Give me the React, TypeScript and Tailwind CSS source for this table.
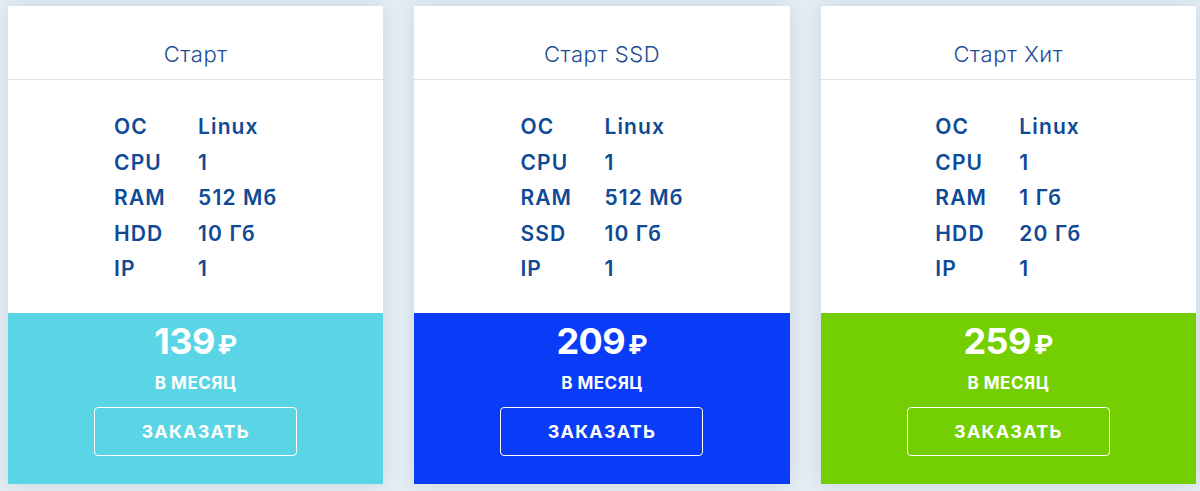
const plans = [
  {
    name: 'Старт',
    specs: [
      ['OC', 'Linux'],
      ['CPU', '1'],
      ['RAM', '512 Мб'],
      ['HDD', '10 Гб'],
      ['IP', '1'],
    ],
    price: '139',
    color: 'bg-[#5ad5e5]',
  },
  {
    name: 'Старт SSD',
    specs: [
      ['OC', 'Linux'],
      ['CPU', '1'],
      ['RAM', '512 Мб'],
      ['SSD', '10 Гб'],
      ['IP', '1'],
    ],
    price: '209',
    color: 'bg-[#0a3cf8]',
  },
  {
    name: 'Старт Хит',
    specs: [
      ['OC', 'Linux'],
      ['CPU', '1'],
      ['RAM', '1 Гб'],
      ['HDD', '20 Гб'],
      ['IP', '1'],
    ],
    price: '259',
    color: 'bg-[#74cf02]',
  },
];

export default function App() {
  return (
    <div className="h-[491px] w-[1200px] overflow-hidden bg-[#e4edf3] pl-2 pr-1 pt-[6px] font-['Inter',sans-serif]">
      <div className="grid grid-cols-3 gap-[31px]">
        {plans.map((plan) => (
          <div key={plan.name} className="flex h-[478px] flex-col bg-white shadow-[0_0_18px_rgba(30,60,90,0.12)]">
            <div className="flex h-[74px] items-end justify-center border-b border-[#dbe3ec] pb-[8px] text-[22px] font-light tracking-[0.6px] text-[#1b4c93]">
              {plan.name}
            </div>
            <div className="flex flex-1 justify-center pt-[29px]">
              <div className="grid h-fit grid-cols-[auto_auto] gap-x-[28px] text-[21px] font-semibold leading-[35.5px] tracking-[1.1px] text-[#0e4a95]">
                {plan.specs.map(([k, v]) => (
                  <div key={k} className="contents">
                    <span className="w-[56px]">{k}</span>
                    <span>{v}</span>
                  </div>
                ))}
              </div>
            </div>
            <div className={`flex h-[171px] flex-col items-center text-white ${plan.color}`}>
              <div className="mt-[8px] flex items-baseline gap-[3px] font-bold leading-[40px]">
                <span className="text-[36px] tracking-[-0.5px]">{plan.price}</span>
                <span className="text-[26px]">₽</span>
              </div>
              <div className="mt-[8px] text-[17px] font-bold leading-[20px] tracking-[0.5px]">В МЕСЯЦ</div>
              <button className="mt-[14px] h-[49px] w-[203px] rounded-[4px] border border-white text-[18px] font-bold tracking-[1.2px] text-white">
                ЗАКАЗАТЬ
              </button>
            </div>
          </div>
        ))}
      </div>
    </div>
  );
}
